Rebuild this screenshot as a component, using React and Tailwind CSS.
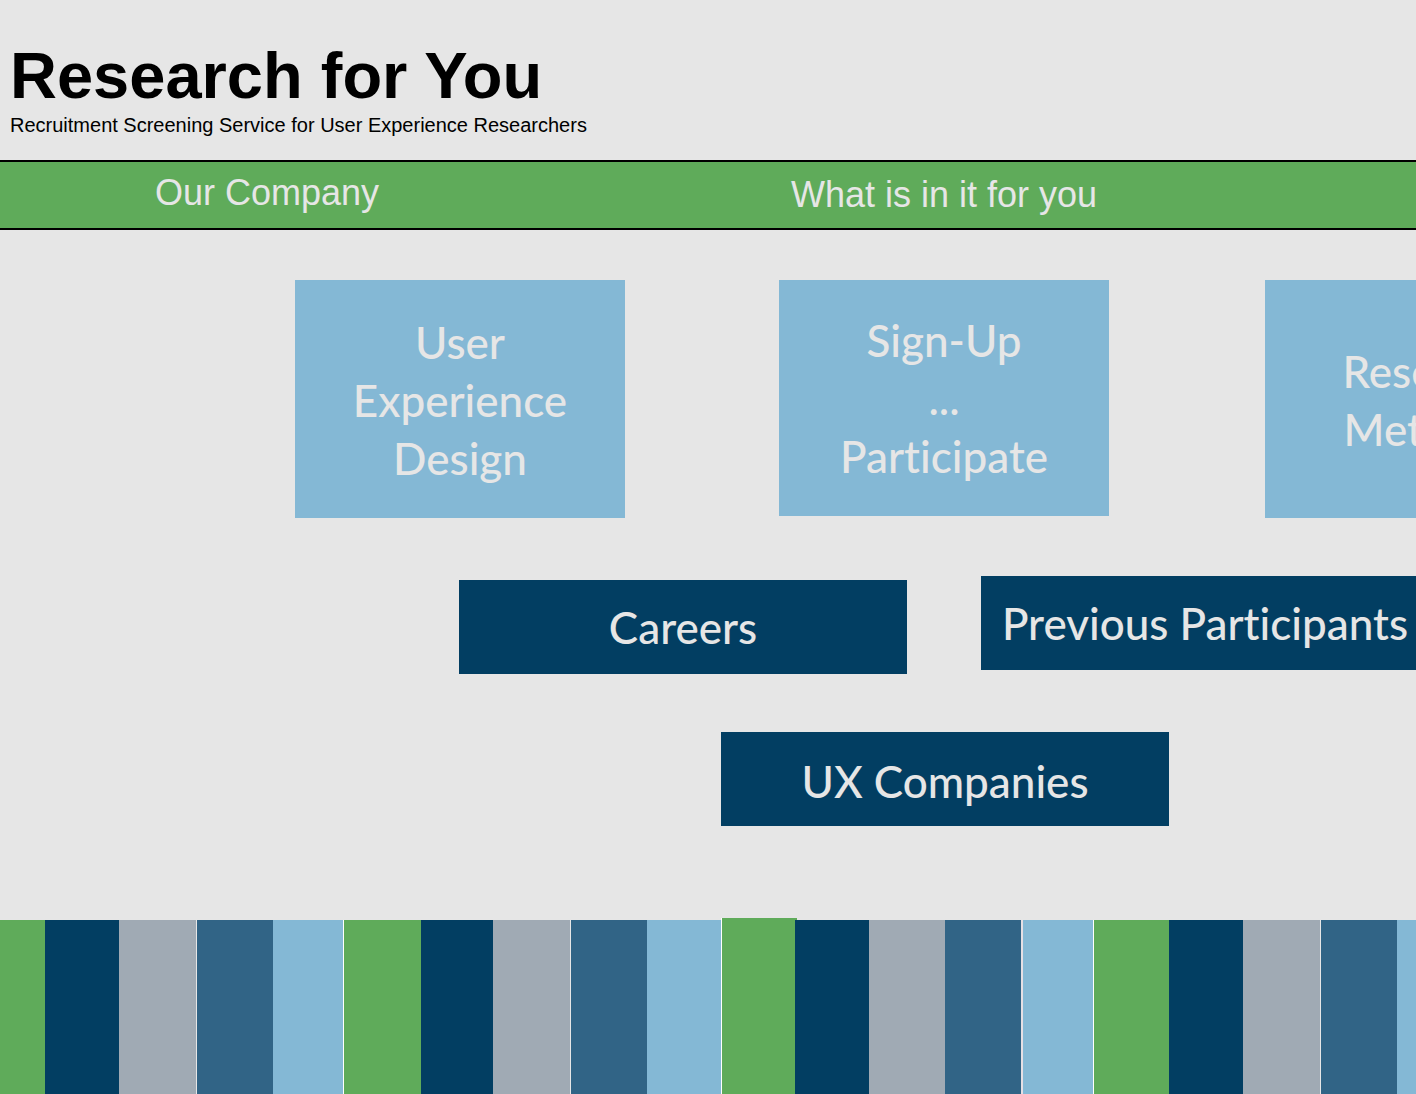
const GREEN = 'bg-[#5fab5a]';
const NAVY = 'bg-[#023e62]';
const GREY = 'bg-[#a0aab4]';
const STEEL = 'bg-[#316486]';
const SKY = 'bg-[#84b8d5]';

const stripes = [
  [GREEN, 'w-[45px]'],
  [NAVY, 'w-[74px]'],
  [GREY, 'w-[77px]'],
  [STEEL, 'w-[77px] border-l border-[#e6e6e6]'],
  [SKY, 'w-[70px]'],
  [GREEN, 'w-[78px] border-l border-white'],
  [NAVY, 'w-[72px]'],
  [GREY, 'w-[77px]'],
  [STEEL, 'w-[77px] border-l border-[#e6e6e6]'],
  [SKY, 'w-[74px]'],
  [GREEN, 'w-[76px] -mt-0.5 -mr-0.5 border-l border-white'],
  [NAVY, 'w-[74px]'],
  [GREY, 'w-[76px]'],
  [STEEL, 'w-[76px]'],
  [SKY, 'w-[72px] border-l-2 border-[#e5dfe4]'],
  [GREEN, 'w-[76px] border-l border-white'],
  [NAVY, 'w-[74px]'],
  [GREY, 'w-[77px]'],
  [STEEL, 'w-[77px] border-l border-[#e6e6e6]'],
  [SKY, 'flex-1'],
];

function Tile({ lines, className = 'h-[238px] pt-0.5' }) {
  return (
    <a
      href="#"
      className={`flex w-[330px] shrink-0 flex-col items-center justify-center bg-[#84b8d5] text-center text-[44px] leading-[58px] ${className}`}
    >
      {lines.map((line) => (
        <span key={line} className="block">{line}</span>
      ))}
    </a>
  );
}

function Banner({ children, className = '' }) {
  return (
    <a
      href="#"
      className={`flex h-[94px] w-[448px] shrink-0 items-center justify-center whitespace-nowrap bg-[#023e62] text-[44px] leading-[58px] ${className}`}
    >
      {children}
    </a>
  );
}

export default function App() {
  return (
    <div className="flex min-h-screen flex-col overflow-hidden bg-[#e6e6e6] font-['Liberation_Sans',Arial,sans-serif] text-black">
      <header className="px-2.5 pt-10 pb-[22px]">
        <h1 className="text-[65px] leading-[72px] font-bold">Research for You</h1>
        <p className="text-[20px] leading-[26px]">Recruitment Screening Service for User Experience Researchers</p>
      </header>

      <nav className="flex h-[70px] shrink-0 items-center border-y-2 border-black bg-[#5fab5a] text-[36px] leading-10 whitespace-nowrap text-[#e6e6e6]">
        <a href="#" className="w-[534px] shrink-0 pb-1 text-center">Our Company</a>
        <a href="#" className="w-[820px] shrink-0 text-center">What is in it for you</a>
      </nav>

      <main className="font-['Lato',Calibri,sans-serif] font-medium text-[#e6e6e6] [font-variant-ligatures:none]">
        <div className="flex items-start gap-[154px] pt-[50px] pl-[295px]">
          <Tile lines={['User', 'Experience', 'Design']} />
          <Tile lines={['Sign-Up', '...', 'Participate']} className="mr-0.5 h-[236px]" />
          <Tile lines={['Research', 'Methods']} />
        </div>
        <div className="flex items-start gap-[74px] pt-[58px] pl-[459px]">
          <Banner className="mt-1">Careers</Banner>
          <Banner>Previous Participants</Banner>
        </div>
        <div className="flex pt-[58px] pb-[94px] pl-[721px]">
          <Banner className="pt-1">UX Companies</Banner>
        </div>
      </main>

      <footer className="flex min-h-40 flex-1" aria-hidden="true">
        {stripes.map(([colour, shape], i) => (
          <div key={i} className={`${colour} ${shape} ${shape === 'flex-1' ? '' : 'shrink-0'}`} />
        ))}
      </footer>
    </div>
  );
}
